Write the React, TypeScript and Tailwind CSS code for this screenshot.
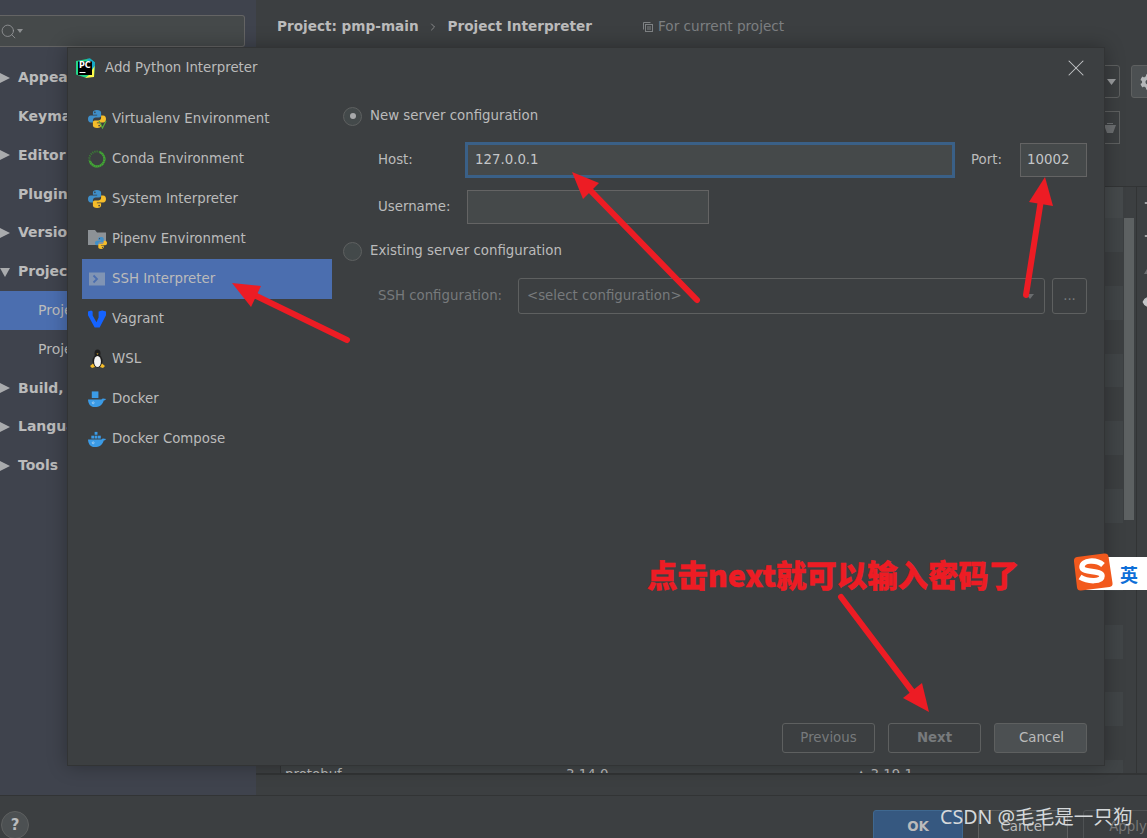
import { ChevronRight, Eye, Minus, Plus, Search, X } from "lucide-react";
import { FaCog } from "react-icons/fa";

const FONT = "font-['DejaVu_Sans','Noto_Sans_CJK_SC',sans-serif]";

function Tri({ down }: { down?: boolean }) {
  return (
    <svg width="10" height="12" viewBox="0 0 10 12" className="shrink-0">
      {down ? <path d="M0 2h10L5 11z" fill="#a9abad" /> : <path d="M0 1l10 5-10 5z" fill="#a9abad" />}
    </svg>
  );
}

function PythonLogo({ size = 18 }: { size?: number }) {
  const half = "M11.9 1C8.2 1 7 2.6 7 4v2.8h5.2v1H4.3C2.3 7.8 1 9.5 1 12s1.3 4.2 3.3 4.2H7v-2.6c0-2 1.6-3.4 3.5-3.4h4.2c1.3 0 2.3-1 2.3-2.4V4c0-1.7-2-3-5.1-3z";
  return (
    <svg width={size} height={size} viewBox="1 1 22 22">
      <path d={half} fill="#3f8fc9" />
      <circle cx="9.4" cy="3.9" r="1" fill="#3c3f41" />
      <g transform="rotate(180 12 12)">
        <path d={half} fill="#f5bd2a" />
        <circle cx="9.4" cy="3.9" r="1" fill="#3c3f41" />
      </g>
    </svg>
  );
}

function VirtualenvIcon() {
  return (
    <div className="relative h-[18px] w-[18px]">
      <PythonLogo />
      <svg width="9" height="9" viewBox="0 0 9 9" className="absolute -bottom-[1px] -right-[1px]">
        <path d="M1 1l3.5 7L8 1" fill="none" stroke="#5aa83c" strokeWidth="1.2" />
      </svg>
    </div>
  );
}

function CondaIcon() {
  return (
    <svg width="18" height="18" viewBox="0 0 18 18">
      <circle cx="9" cy="9" r="7.4" fill="none" stroke="#47a838" strokeWidth="2.2" strokeDasharray="30 16.5" transform="rotate(-70 9 9)" />
      <circle cx="9" cy="9" r="7.6" fill="none" stroke="#3a8a33" strokeWidth="2" strokeDasharray="1 1.2" />
    </svg>
  );
}

function PipenvIcon() {
  return (
    <div className="relative h-[18px] w-[19px]">
      <svg width="18" height="15" viewBox="0 0 18 15" className="absolute left-0 top-0">
        <path d="M0 0h7l2 2.4h9V15H0z" fill="#8d9296" />
      </svg>
      <div className="absolute -bottom-[1px] left-[7px]">
        <PythonLogo size={12} />
      </div>
    </div>
  );
}

function SshIcon() {
  return (
    <svg width="16" height="14" viewBox="0 0 16 14">
      <rect width="16" height="13" y="0.5" fill="#8094b4" />
      <path d="M4.5 3.5L8 7l-3.5 3.5" fill="none" stroke="#4b6eaf" strokeWidth="1.8" />
    </svg>
  );
}

function VagrantIcon() {
  return (
    <svg width="18" height="18" viewBox="0 0 17 17">
      <path d="M0 1.5L3 .5l1.4 1v3.800L8 11.500l2-4.500V1.500L13.500.5 17 1.500V5L11 16.500H6.300L0 5z" fill="#1563ff" />
    </svg>
  );
}

function PenguinIcon() {
  return (
    <svg width="17" height="20" viewBox="0 0 16 20">
      <ellipse cx="8" cy="4.5" rx="3" ry="4" fill="#1d1d1d" />
      <ellipse cx="8" cy="12" rx="5" ry="6.5" fill="#1d1d1d" />
      <ellipse cx="8" cy="12.5" rx="3.4" ry="5.5" fill="#f2f2f2" />
      <path d="M7 4.5h2l-1 1.2z" fill="#f5bd2a" />
      <path d="M0.5 17l3-2.500 2 3.500-3 1zM15.500 17l-3-2.500-2 3.500 3 1z" fill="#f5bd2a" />
    </svg>
  );
}

function DockerIcon({ compose }: { compose?: boolean }) {
  return (
    <svg width="19" height="18" viewBox="0 0 19 18">
      <path d="M0 9.5h14.2c.6-1 1.7-1.5 2.6-.8.6.1 1.3 0 2.2.2-.5 1.100-1.500 1.500-2.400 1.600C15.500 15 12 17.500 7 17.500 2.500 17.500.2 14 0 9.500z" fill="#3b9be6" />
      <circle cx="5.5" cy="13" r="1" fill="none" stroke="#cfe6f8" strokeWidth="0.6" />
      {compose ? (
        <g fill="#3b9be6">
          <rect x="3.5" y="5.5" width="3" height="3" />
          <rect x="7" y="5.5" width="3" height="3" />
          <rect x="10.5" y="5.5" width="3" height="3" />
          <rect x="7" y="1.5" width="3" height="3" />
        </g>
      ) : (
        <rect x="4" y="1" width="7" height="7" fill="#3b9be6" />
      )}
    </svg>
  );
}

function PyCharmLogo() {
  return (
    <div className="relative h-[20px] w-[20px] shrink-0">
      <svg width="20" height="20" viewBox="0 0 20 20" className="absolute inset-0">
        <path d="M1 3l14-2.500 5 4-1 14-9 1-9-3z" fill="#21d789" />
        <path d="M12 .8l3-.3 5 4-1 9z" fill="#17a6c8" />
        <path d="M19.5 8l-.5 11-9 1 4-3z" fill="#fcf84a" />
        <rect x="3" y="3.5" width="14" height="13.5" fill="#000" />
        <rect x="4.5" y="14" width="6" height="1" fill="#fff" />
      </svg>
      <span className="absolute left-[4px] top-[3px] text-[8px] font-bold leading-[10px] text-white">PC</span>
    </div>
  );
}

function SogouLogo() {
  return (
    <div className="absolute left-[1073px] top-[553px] flex h-[38px] items-center">
      <div className="absolute left-[12px] top-[4px] flex h-[33px] w-[62px] items-center justify-end rounded-l-[2px] bg-white pr-[9px]">
        <span className="text-[18px] font-bold leading-none text-[#0f6fd8] [font-family:'Noto_Sans_CJK_SC',sans-serif]">英</span>
      </div>
      <svg width="40" height="38" viewBox="0 0 40 38" className="relative">
        <path d="M1 8.5Q.5 4.500 4 4L31 .5Q35 0 35.500 3.500L39.500 30Q40 33.500 36.500 34L8 37.500Q4.500 38 4 34.500z" fill="#f2591d" />
        <path d="M30 12C23 6 9 7 9 14c0 6 20 3 20 9 0 6-14 6-22 1" fill="none" stroke="#fff" strokeWidth="5.5" />
      </svg>
    </div>
  );
}

function Arrows() {
  const arrows = [
    { line: "M347 340L248 292", head: "232,283 261,286 251,307" },
    { line: "M697 300L590 190", head: "572,172 599,183 583,199" },
    { line: "M1026 295L1041 200", head: "1045,177 1029,202 1053,206" },
    { line: "M841 597L915 695", head: "929,712 903,698 922,683" },
  ];
  return (
    <svg width="1147" height="838" viewBox="0 0 1147 838" className="pointer-events-none absolute inset-0">
      {arrows.map((a) => (
        <g key={a.head}>
          <path d={a.line} stroke="#ed1c24" strokeWidth="6" strokeLinecap="round" fill="none" />
          <polygon points={a.head} fill="#ed1c24" />
        </g>
      ))}
    </svg>
  );
}

const TREE = [
  { label: "Appearance & Behavior", arrow: "right" },
  { label: "Keymap" },
  { label: "Editor", arrow: "right" },
  { label: "Plugins" },
  { label: "Version Control", arrow: "right" },
  { label: "Project: pmp-main", arrow: "down" },
  { label: "Project Interpreter", child: true, active: true },
  { label: "Project Structure", child: true },
  { label: "Build, Execution, Deployment", arrow: "right" },
  { label: "Languages & Frameworks", arrow: "right" },
  { label: "Tools", arrow: "right" },
];

function Sidebar() {
  return (
    <aside className="flex w-[256px] shrink-0 flex-col overflow-hidden bg-[#3f434d]">
      <div className="mt-[15px] flex h-[32px] w-[245px] shrink-0 items-center rounded-r-[3px] border border-l-0 border-[#646464] bg-[#45494a]">
        <Search size={17} strokeWidth={1.1} color="#9a9c9e" />
        <svg width="6" height="4" viewBox="0 0 6 4">
          <path d="M0 0h6L3 4z" fill="#8d8f91" />
        </svg>
      </div>
      <div className="mt-[11.3px] flex flex-col">
        {TREE.map((t) => (
          <div
            key={t.label}
            className={
              "flex h-[38.8px] shrink-0 items-center whitespace-nowrap text-[14px] " +
              (t.child ? "pl-[38px] font-normal " : "font-bold ") +
              (t.active ? "bg-[#4b6eaf]" : "")
            }
          >
            {!t.child && (
              <span className="flex w-[18px] shrink-0">{t.arrow && <Tri down={t.arrow === "down"} />}</span>
            )}
            {t.label}
          </div>
        ))}
      </div>
    </aside>
  );
}

function BackgroundTable() {
  const rows = Array.from({ length: 16 });
  return (
    <div className="mt-[42px] flex h-[589px] shrink-0 overflow-hidden border-t border-b-2 border-[#323435] pl-[24px]">
      <div className="flex w-[843px] shrink-0 flex-col border-l border-[#323435]">
        <div className="h-[31px] shrink-0 bg-[#45494b]" />
        {rows.map((_, i) => (
          <div key={i} className={"h-[33.9px] shrink-0 " + (i % 2 === 0 ? "bg-[#414547]" : "bg-[#3c3f41]")} />
        ))}
        <div className="flex h-[33.9px] shrink-0 items-center bg-[#414547] pb-[4px] text-[13.33px]">
          <span className="w-[285px] pl-[4px]">protobuf</span>
          <span className="w-[290px]">3.14.0</span>
          <span>▲ 3.19.1</span>
        </div>
      </div>
      <div className="w-[13px] shrink-0 pl-[1px] pt-[31px]">
        <div className="h-[302px] w-[10px] bg-[#5d6162]" />
      </div>
      <div className="flex flex-1 flex-col gap-[17px] overflow-hidden border-l border-[#323435] pl-[5px] pt-[8px] text-[#c4c6c8]">
        <Plus size={16} className="shrink-0" />
        <Minus size={16} className="shrink-0" />
        <svg width="16" height="16" viewBox="0 0 16 16" className="shrink-0">
          <path d="M8 3l6 10H2z" fill="#6a6d6f" />
        </svg>
        <Eye size={16} fill="#c4c6c8" className="shrink-0" />
      </div>
    </div>
  );
}

function MainPanel() {
  return (
    <div className="flex min-w-0 flex-1 flex-col overflow-hidden">
      <div className="flex h-[46px] shrink-0 items-center whitespace-nowrap pl-[21px] pt-[7px] text-[13.6px]">
        <span className="font-bold">Project: pmp-main</span>
        <ChevronRight size={12} strokeWidth={1.2} className="ml-[8px] mr-[9px]" />
        <span className="font-bold">Project Interpreter</span>
        <svg width="12" height="12" viewBox="0 0 12 12" className="ml-[50px] mr-[4px]" fill="none" stroke="#7f8284">
          <path d="M1.5 8.5v-7h7" />
          <rect x="3.5" y="3.5" width="7" height="7" />
          <path d="M5 6h4M5 8h4" />
        </svg>
        <span className="text-[#7c7f81]">For current project</span>
      </div>
      <div className="mt-[19px] flex h-[33px] shrink-0 justify-end gap-[11px]">
        <div className="flex w-[100px] items-center justify-end rounded-[3px] border border-[#5e6060] pr-[3px]">
          <svg width="9" height="6" viewBox="0 0 9 6">
            <path d="M0 0h9L4.5 6z" fill="#9a9c9e" />
          </svg>
        </div>
        <div className="-mr-[17px] flex w-[33px] items-center justify-center rounded-[3px] border border-[#5e6060] bg-[#4c5052]">
          <FaCog size={16} color="#b4b6b8" />
        </div>
      </div>
      <div className="mr-[27px] mt-[13px] flex h-[33px] shrink-0 justify-end">
        <div className="flex w-[60px] items-center justify-end border border-[#5e6060] pr-[3px]">
          <svg width="12" height="10" viewBox="0 0 12 10">
            <path d="M0 2h12L9 10H3zM3 0h6v1H3z" fill="#6c6f71" />
          </svg>
        </div>
      </div>
      <BackgroundTable />
    </div>
  );
}

function Footer() {
  return (
    <div className="flex h-[43px] shrink-0 overflow-hidden border-t border-[#323435]">
      <div className="ml-[1px] mt-[15px] flex h-[28px] w-[28px] shrink-0 items-center justify-center rounded-full border border-[#5e6060] bg-[#4c5052] text-[15px] font-bold text-[#b9bbbd]">
        ?
      </div>
      <div className="ml-auto mt-[14px] flex gap-[15px]">
        <div className="flex h-[34px] w-[90px] items-center justify-center rounded-[3px] border border-[#3f6890] bg-[#365880] font-bold">
          OK
        </div>
        <div className="flex h-[34px] w-[90px] items-center justify-center rounded-[3px] border border-[#5e6060] bg-[#414546]">
          Cancel
        </div>
        <div className="-mr-[26px] flex h-[34px] w-[90px] items-center justify-center rounded-[3px] border border-[#4f5254] text-[#777]">
          Apply
        </div>
      </div>
    </div>
  );
}

const INTERPRETERS = [
  { label: "Virtualenv Environment", icon: <VirtualenvIcon /> },
  { label: "Conda Environment", icon: <CondaIcon /> },
  { label: "System Interpreter", icon: <PythonLogo /> },
  { label: "Pipenv Environment", icon: <PipenvIcon /> },
  { label: "SSH Interpreter", icon: <SshIcon />, active: true },
  { label: "Vagrant", icon: <VagrantIcon /> },
  { label: "WSL", icon: <PenguinIcon /> },
  { label: "Docker", icon: <DockerIcon /> },
  { label: "Docker Compose", icon: <DockerIcon compose /> },
];

function Radio({ checked }: { checked?: boolean }) {
  return (
    <span className="flex h-[19px] w-[19px] shrink-0 items-center justify-center rounded-full border border-[#5e6060] bg-[#43494a]">
      {checked && <span className="h-[6px] w-[6px] rounded-full bg-[#a7a9ab]" />}
    </span>
  );
}

function Dialog() {
  return (
    <div className="absolute left-[67px] top-[47px] flex h-[719px] w-[1038px] flex-col border border-[#323435] bg-[#3c3f41] shadow-[0_0_18px_rgba(0,0,0,0.3)]">
      <div className="flex h-[39px] shrink-0 items-center pl-[7px] pr-[14px]">
        <PyCharmLogo />
        <span className="ml-[10px]">Add Python Interpreter</span>
        <X size={28} strokeWidth={0.9} color="#c4c6c8" className="ml-auto" />
      </div>
      <div className="flex min-h-0 flex-1 pl-[14px] pt-[12px]">
        <div className="w-[250px] shrink-0">
          {INTERPRETERS.map((it) => (
            <div key={it.label} className={"flex h-[40px] items-center pl-[6px] " + (it.active ? "bg-[#4b6eaf]" : "")}>
              <span className="flex w-[18px] shrink-0 justify-center">{it.icon}</span>
              <span className="ml-[6px]">{it.label}</span>
            </div>
          ))}
        </div>
        <div className="flex min-w-0 flex-1 flex-col pb-[12px] pl-[11px] pr-[17px] pt-[7px]">
          <label className="flex h-[20px] items-center gap-[8px]">
            <Radio checked />
            New server configuration
          </label>
          <div className="mt-[16px] flex items-center pl-[35px]">
            <span className="w-[87px] shrink-0">Host:</span>
            <div className="flex h-[36px] w-[490px] shrink-0 items-center border-[3px] border-[#3a6087] bg-[#45494a] pl-[7px] text-[#c4c6c8]">
              127.0.0.1
            </div>
            <span className="ml-[16px] w-[49px] shrink-0">Port:</span>
            <div className="flex h-[34px] w-[67px] shrink-0 items-center border border-[#646464] bg-[#45494a] pl-[6px] text-[#c4c6c8]">
              10002
            </div>
          </div>
          <div className="mt-[12px] flex items-center pl-[35px]">
            <span className="w-[89px] shrink-0">Username:</span>
            <div className="h-[34px] w-[242px] shrink-0 border border-[#646464] bg-[#45494a]" />
          </div>
          <label className="mt-[17px] flex h-[20px] items-center gap-[8px]">
            <Radio />
            Existing server configuration
          </label>
          <div className="mt-[17px] flex items-center pl-[35px] text-[#777a7c]">
            <span className="w-[140px] shrink-0">SSH configuration:</span>
            <div className="flex h-[36px] w-[527px] shrink-0 items-center rounded-[3px] border border-[#5e6060] pl-[8px] pr-[10px]">
              &lt;select configuration&gt;
              <svg width="8" height="5" viewBox="0 0 8 5" className="ml-auto">
                <path d="M0 0h8L4 5z" fill="#6a6d6f" />
              </svg>
            </div>
            <div className="ml-[7px] flex h-[36px] w-[35px] shrink-0 items-center justify-center rounded-[3px] border border-[#5e6060]">
              ...
            </div>
          </div>
          <div className="mt-auto flex justify-end gap-[13px]">
            <div className="flex h-[30px] w-[93px] items-center justify-center rounded-[3px] border border-[#5e6060] font-medium text-[#777a7c]">
              Previous
            </div>
            <div className="flex h-[30px] w-[93px] items-center justify-center rounded-[3px] border border-[#5e6060] font-bold text-[#777a7c]">
              Next
            </div>
            <div className="flex h-[30px] w-[93px] items-center justify-center rounded-[3px] border border-[#5e6060] bg-[#4c5052] pl-[2px]">
              Cancel
            </div>
          </div>
        </div>
      </div>
    </div>
  );
}

export default function App() {
  return (
    <div className={"relative flex h-[838px] w-[1147px] flex-col overflow-hidden bg-[#3c3f41] text-[13.33px] text-[#bbbbbb] " + FONT}>
      <div className="flex h-[795px] shrink-0">
        <Sidebar />
        <MainPanel />
      </div>
      <Footer />
      <Dialog />
      <Arrows />
      <SogouLogo />
      <div className="absolute left-[647px] top-[554px] whitespace-nowrap text-[30.4px] font-black leading-[40px] text-[#ed1c24] [-webkit-text-stroke:0.5px_#ed1c24] [font-family:'Noto_Sans_CJK_SC',sans-serif]">
        点击next就可以输入密码了
      </div>
      <div className="absolute left-[940px] top-[804px] whitespace-nowrap text-[19.6px] leading-[26px] text-[#d5d8da] [font-family:'Noto_Sans','Noto_Sans_CJK_SC',sans-serif]">
        CSDN @毛毛是一只狗
      </div>
    </div>
  );
}
